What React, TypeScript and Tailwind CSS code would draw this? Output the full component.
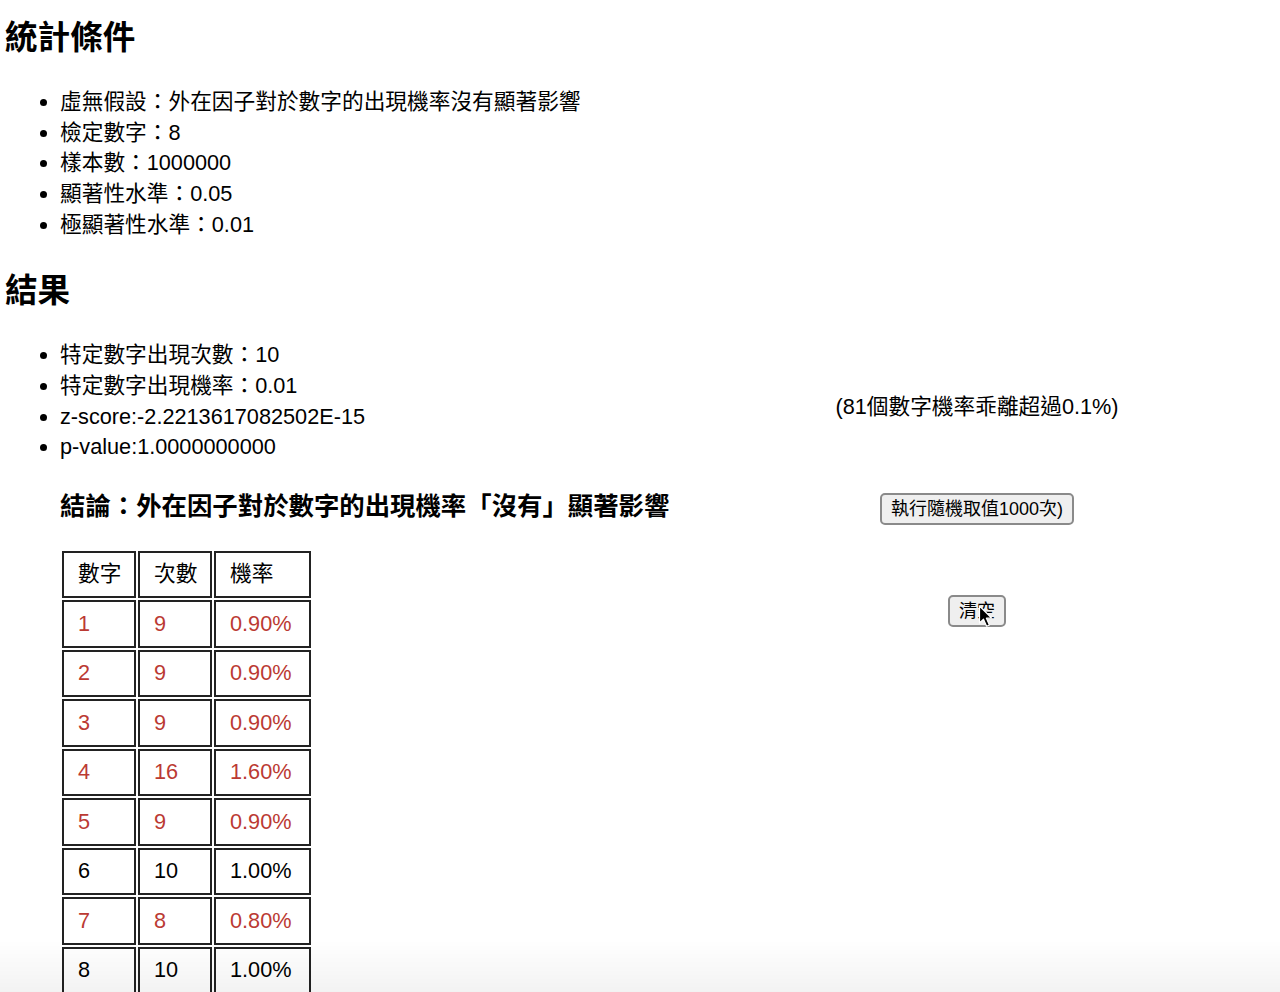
const conditions = [
  '虛無假設：外在因子對於數字的出現機率沒有顯著影響',
  '檢定數字：8',
  '樣本數：1000000',
  '顯著性水準：0.05',
  '極顯著性水準：0.01',
];

const results = [
  '特定數字出現次數：10',
  '特定數字出現機率：0.01',
  'z-score:-2.2213617082502E-15',
  'p-value:1.0000000000',
];

const rows = [
  { n: 1, count: 9, rate: '0.90%', off: true },
  { n: 2, count: 9, rate: '0.90%', off: true },
  { n: 3, count: 9, rate: '0.90%', off: true },
  { n: 4, count: 16, rate: '1.60%', off: true },
  { n: 5, count: 9, rate: '0.90%', off: true },
  { n: 6, count: 10, rate: '1.00%', off: false },
  { n: 7, count: 8, rate: '0.80%', off: true },
  { n: 8, count: 10, rate: '1.00%', off: false },
];

const cell =
  'border-2 border-[#222] h-[47.5px] pl-[14px] pr-[6px] text-left font-normal align-middle whitespace-nowrap';

function Cursor() {
  return (
    <svg
      className="pointer-events-none absolute left-[978px] top-[605px]"
      width="16"
      height="24"
      viewBox="0 0 16 24"
    >
      <path
        d="M1.5 1 L1.5 18 L5.5 14.2 L8.6 21.2 L11.4 20 L8.4 13.2 L13.8 13.2 Z"
        fill="#000"
        stroke="#fff"
        strokeWidth="1.2"
        strokeLinejoin="round"
      />
    </svg>
  );
}

export default function App() {
  return (
    <div className="relative min-h-[992px] bg-white pt-[15px] pl-[5px] text-black font-['Liberation_Sans','Noto_Sans_CJK_TC',sans-serif]">
      {/* 統計條件 */}
      <h2 className="text-[32.6px] leading-[45px] font-bold">統計條件</h2>
      <ul className="mt-[26.8px] list-disc pl-[55px] text-[21.7px] leading-[30.75px]">
        {conditions.map((c) => (
          <li key={c}>{c}</li>
        ))}
      </ul>

      <div className="mt-[27px] flex">
        {/* 結果 */}
        <div className="w-[669px] shrink-0">
          <h2 className="text-[32.6px] leading-[45px] font-bold">結果</h2>
          <ul className="mt-[27.5px] list-disc pl-[55px] text-[21.7px] leading-[30.75px]">
            {results.map((r) => (
              <li key={r}>{r}</li>
            ))}
          </ul>
          <h3 className="mt-[24.5px] ml-[55px] text-[25.4px] leading-[36px] font-bold">
            結論：外在因子對於數字的出現機率「沒有」顯著影響
          </h3>
          <table className="mt-[25px] ml-[55px] table-fixed border-separate border-spacing-x-[2px] border-spacing-y-[2.6px] text-[21.7px]">
            <colgroup>
              <col className="w-[74px]" />
              <col className="w-[74px]" />
              <col className="w-[97px]" />
            </colgroup>
            <thead>
              <tr>
                <th className={cell}>數字</th>
                <th className={cell}>次數</th>
                <th className={cell}>機率</th>
              </tr>
            </thead>
            <tbody>
              {rows.map((r) => (
                <tr key={r.n} className={r.off ? 'text-[#bb3a33]' : 'text-black'}>
                  <td className={cell}>{r.n}</td>
                  <td className={cell}>{r.count}</td>
                  <td className={cell}>{r.rate}</td>
                </tr>
              ))}
            </tbody>
          </table>
        </div>

        {/* 右側 */}
        <div className="flex flex-1 flex-col items-center pt-[125.6px]">
          <p className="text-[21.7px] leading-[28px]">(81個數字機率乖離超過0.1%)</p>
          <button
            type="button"
            className="mt-[72px] h-[32px] rounded-[5px] border-2 border-[#8a8a8a] bg-[#efefef] px-[9px] text-[18px] leading-none"
          >
            執行隨機取值1000次)
          </button>
          <button
            type="button"
            className="mt-[70px] h-[32px] rounded-[5px] border-2 border-[#8a8a8a] bg-[#efefef] px-[9px] text-[18px] leading-none"
          >
            清空
          </button>
        </div>
      </div>

      <Cursor />
      <div className="pointer-events-none fixed inset-x-0 bottom-0 h-[52px] bg-linear-to-b from-black/0 to-black/[0.05]" />
    </div>
  );
}
